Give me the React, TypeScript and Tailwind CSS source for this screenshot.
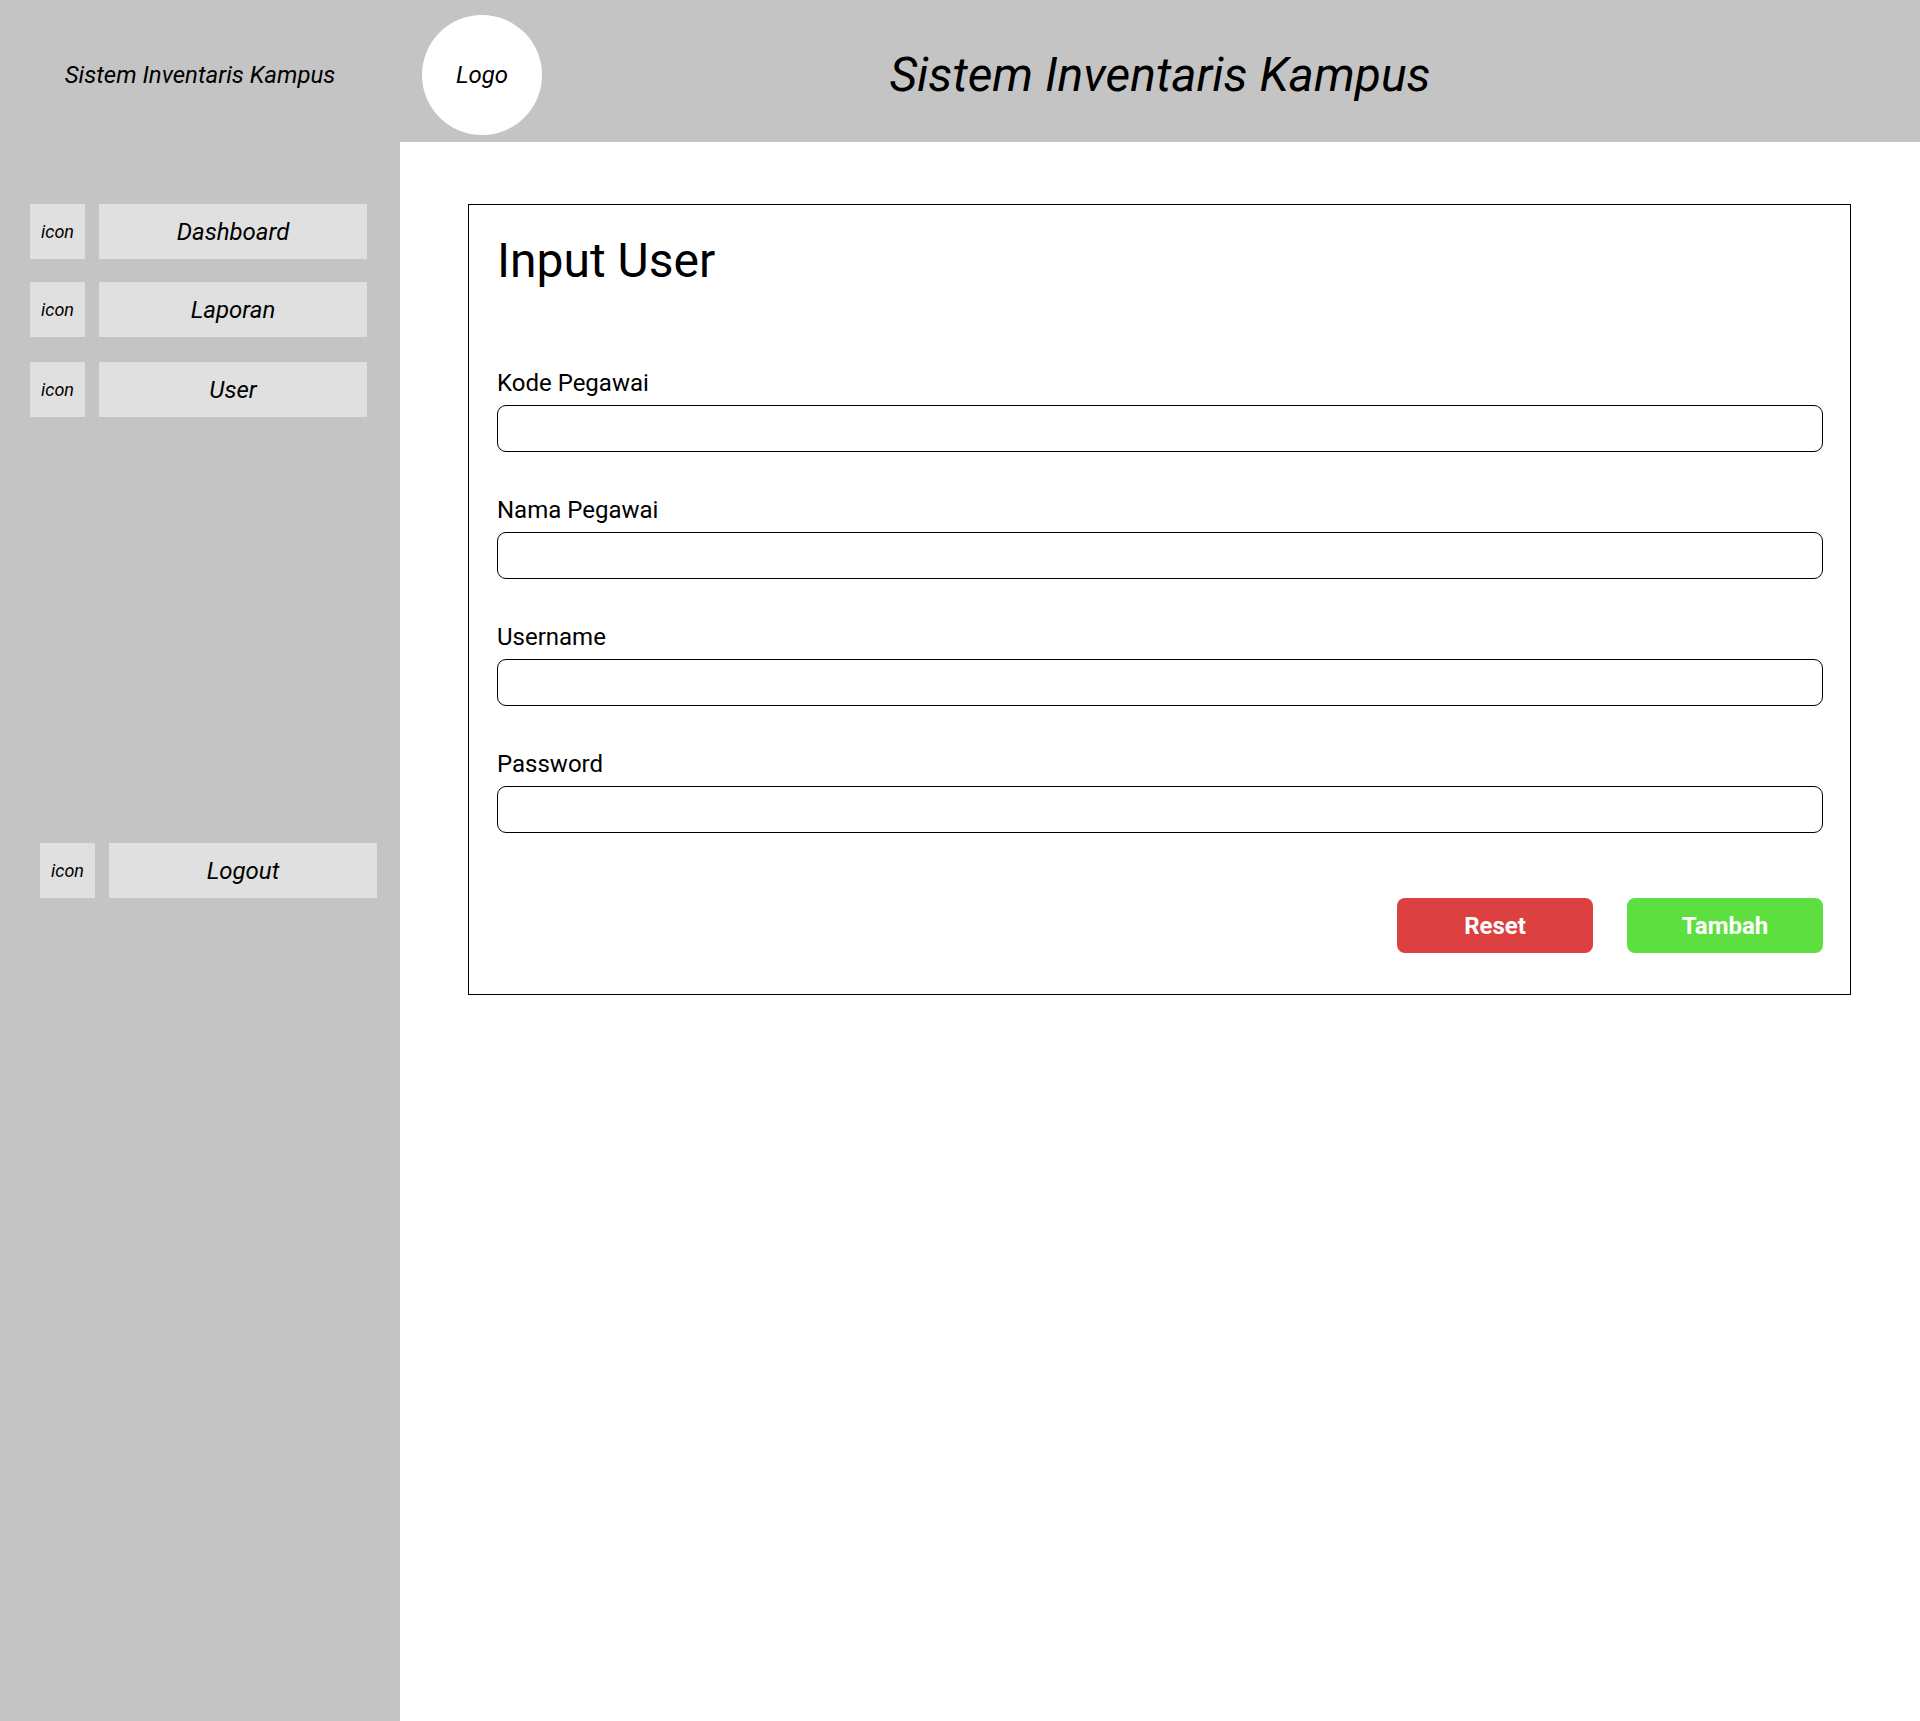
import React from 'react';

const navItems = [
    { label: 'Dashboard', mt: 'mt-0' },
    { label: 'Laporan', mt: 'mt-[23px]' },
    { label: 'User', mt: 'mt-[25px]' },
];

const fields = ['Kode Pegawai', 'Nama Pegawai', 'Username', 'Password'];

function NavRow({ label, className }: { label: string; className?: string }) {
    return (
        <div className={`flex gap-[14px] ${className ?? ''}`}>
            <div className="w-[55px] h-[55px] bg-[#e0e0e0] flex items-center justify-center italic text-[18px] text-black">
                icon
            </div>
            <div className="w-[268px] h-[55px] bg-[#e0e0e0] flex items-center justify-center italic text-[24px] text-black">
                {label}
            </div>
        </div>
    );
}

export default function App() {
    return (
        <div className="w-[1920px] h-[1721px] flex flex-col font-['Roboto',_'Liberation_Sans',_sans-serif] text-black">
            {/* Header */}
            <header className="h-[142px] shrink-0 bg-[#c4c4c4] flex">
                <div className="w-[400px] pt-[8px] flex items-center justify-center italic text-[24px]">
                    Sistem Inventaris Kampus
                </div>
                <div className="flex-1 relative pt-[8px] flex items-center justify-center">
                    <div className="absolute left-[22px] top-[15px] w-[120px] h-[120px] rounded-full bg-white flex items-center justify-center italic text-[24px]">
                        Logo
                    </div>
                    <h1 className="italic text-[48px] leading-none">Sistem Inventaris Kampus</h1>
                </div>
            </header>

            <div className="flex flex-1">
                {/* Sidebar */}
                <aside className="w-[400px] shrink-0 bg-[#c4c4c4] pt-[62px] pl-[30px] flex flex-col">
                    {navItems.map((item) => (
                        <NavRow key={item.label} label={item.label} className={item.mt} />
                    ))}
                    <NavRow label="Logout" className="mt-[426px] ml-[10px]" />
                </aside>

                {/* Content */}
                <main className="flex-1 bg-white pt-[62px] pl-[68px]">
                    <div className="w-[1383px] border border-black pl-[28px] pt-[28px] pb-[41px]">
                        <h2 className="text-[48px] leading-[56px]">Input User</h2>

                        <div className="mt-[80px] flex flex-col gap-[44px]">
                            {fields.map((f) => (
                                <div key={f} className="flex flex-col">
                                    <label className="text-[24px] leading-[28px] mb-[8px]">{f}</label>
                                    <input
                                        type={f === 'Password' ? 'password' : 'text'}
                                        className="w-[1326px] h-[47px] border border-black rounded-[9px] px-3 outline-none"
                                    />
                                </div>
                            ))}
                        </div>

                        <div className="mt-[65px] w-[1326px] flex justify-end gap-[34px]">
                            <button className="w-[196px] h-[55px] rounded-[8px] bg-[#dd4040] text-white font-bold text-[24px]">
                                Reset
                            </button>
                            <button className="w-[196px] h-[55px] rounded-[8px] bg-[#5de03f] text-white font-bold text-[24px]">
                                Tambah
                            </button>
                        </div>
                    </div>
                </main>
            </div>
        </div>
    );
}
